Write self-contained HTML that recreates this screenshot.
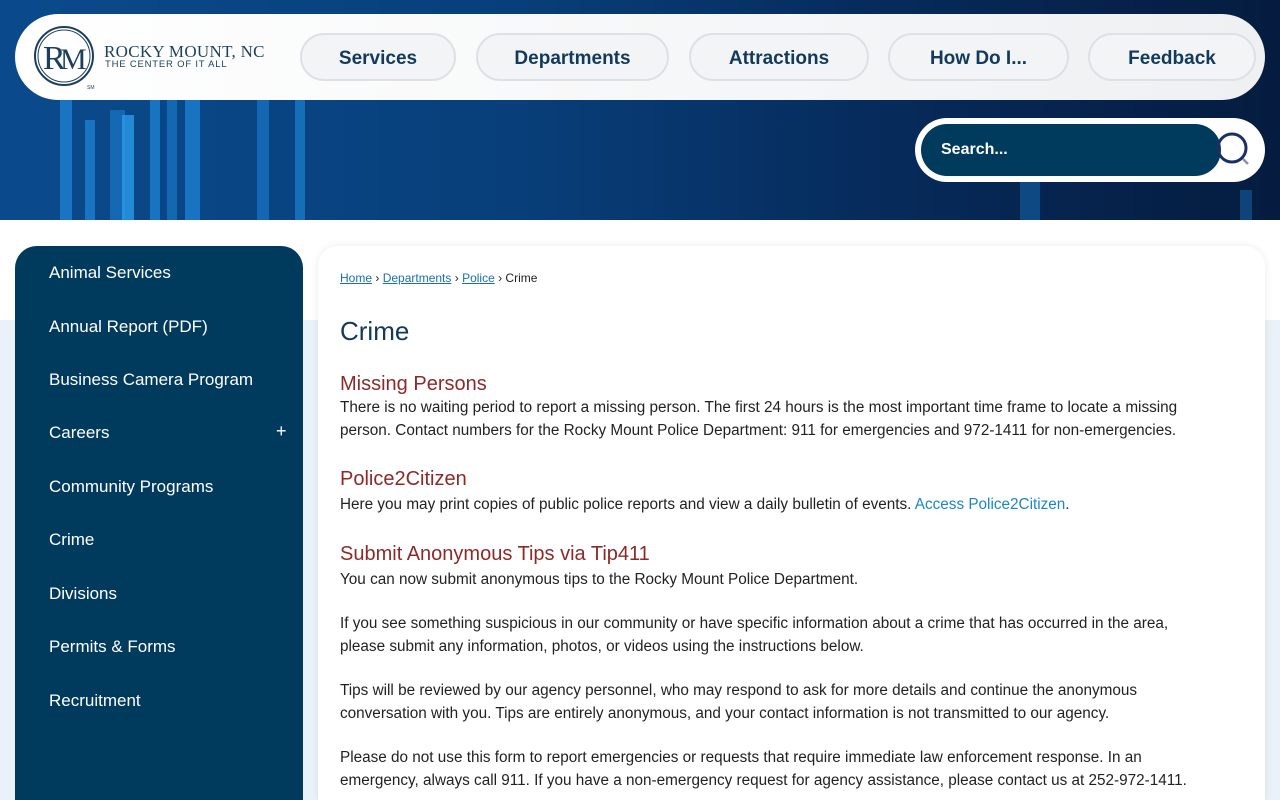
<!DOCTYPE html>
<html><head><meta charset="utf-8"><style>
*{box-sizing:border-box;margin:0;padding:0}
html,body{width:1280px;height:800px;overflow:hidden}
body{font-family:"Liberation Sans",sans-serif;background:#fff;position:relative}
.hdr{position:absolute;left:0;top:0;width:1280px;height:220px;background:linear-gradient(90deg,#0a4a8c 0%,#083f7a 40%,#062a5a 70%,#051c3f 100%);overflow:hidden}
.bar{position:absolute;bottom:0;background:#1d7fd0;opacity:.8}
.lb{position:absolute;left:0;top:320px;width:1280px;height:480px;background:#e9f1f9}
.pill{position:absolute;left:15px;top:14px;width:1250px;height:86px;border-radius:43px;background:linear-gradient(90deg,#fff,#eef0f2)}
.nav{position:absolute;top:33px;height:48px;border:2px solid #dde1e5;border-radius:24px;background:#f3f4f6;color:#123a5c;font-weight:bold;font-size:19px;display:flex;align-items:center;justify-content:center;padding-top:3px}
.search{position:absolute;left:915px;top:118px;width:350px;height:64px;border-radius:32px;background:#fff}
.sin{position:absolute;left:6px;top:6px;width:300px;height:52px;border-radius:26px;background:#003a5d;color:#fff;font-weight:bold;font-size:16px;padding:17px 0 0 20px}
.side{position:absolute;left:15px;top:246px;width:288px;height:554px;background:#003a5d;border-radius:22px 22px 0 0}
.side div{position:absolute;left:34px;color:#fff;font-size:17px}
.card{position:absolute;left:318px;top:246px;width:947px;height:554px;background:#fff;border-radius:20px 20px 0 0;box-shadow:0 0 8px rgba(0,0,0,.08);padding:25px 22px;color:#222;overflow:hidden}
.in{width:870px}
.bc{font-size:12px;color:#222}
.bc a{color:#1a6fb0;text-decoration:underline}
h1{font-weight:normal;font-size:26px;color:#12385a;margin:31px 0 26px}
h2{font-weight:normal;font-size:20px;color:#8c2a2a;margin:0 0 3px;padding-top:4px}
h1+h2{padding-top:0;margin-bottom:1px}
p{font-size:15.3px;line-height:22.5px;margin-bottom:22px}
.lk{color:#1c87c5}
</style></head><body>
<div class="hdr">
<div class="bar" style="left:60px;width:12px;height:120px"></div>
<div class="bar" style="left:85px;width:10px;height:100px"></div>
<div class="bar" style="left:110px;width:15px;height:110px;opacity:.6"></div>
<div class="bar" style="left:122px;width:12px;height:105px;background:#2a9be8"></div>
<div class="bar" style="left:150px;width:10px;height:120px"></div>
<div class="bar" style="left:167px;width:10px;height:120px;opacity:.6"></div>
<div class="bar" style="left:185px;width:15px;height:120px"></div>
<div class="bar" style="left:257px;width:12px;height:120px;opacity:.6"></div>
<div class="bar" style="left:295px;width:10px;height:120px;opacity:.7"></div>
<div class="bar" style="left:1020px;width:20px;height:50px;opacity:.4"></div>
<div class="bar" style="left:1240px;width:12px;height:30px;opacity:.4"></div>
</div>
<div class="lb"></div>
<div class="pill"></div>
<svg style="position:absolute;left:33px;top:25px" width="64" height="66" viewBox="0 0 64 66"><circle cx="31" cy="31" r="29" fill="none" stroke="#1d3f5c" stroke-width="2"/><circle cx="31" cy="31" r="26" fill="none" stroke="#1d3f5c" stroke-width="1"/><text x="10" y="44" font-family="Liberation Serif" font-size="34" fill="#1d3f5c">R</text><text x="27" y="44" font-family="Liberation Serif" font-size="30" fill="#1d3f5c">M</text><text x="54" y="64" font-size="5" fill="#1d3f5c">SM</text></svg>
<div style="position:absolute;left:104px;top:42px;font-family:'Liberation Serif',serif;color:#1d3f5c;font-size:17px;letter-spacing:.3px">ROCKY MOUNT, NC</div>
<div style="position:absolute;left:105px;top:59px;color:#1d3f5c;font-size:9.5px;letter-spacing:.8px">THE CENTER OF IT ALL</div>
<div class="nav" style="left:300px;width:156px">Services</div>
<div class="nav" style="left:476px;width:193px">Departments</div>
<div class="nav" style="left:689px;width:180px">Attractions</div>
<div class="nav" style="left:888px;width:181px">How Do I...</div>
<div class="nav" style="left:1088px;width:168px">Feedback</div>
<div class="search"><div class="sin">Search...</div>
<svg style="position:absolute;left:300px;top:14px" width="36" height="36" viewBox="0 0 36 36"><circle cx="17" cy="16" r="14" fill="none" stroke="#1c2e66" stroke-width="3"/><line x1="28" y1="27" x2="33" y2="32" stroke="#8a93a8" stroke-width="2.5"/></svg></div>
<div class="side">
<div style="top:17px">Animal Services</div>
<div style="top:71px">Annual Report (PDF)</div>
<div style="top:124px">Business Camera Program</div>
<div style="top:177px">Careers</div><div style="top:175px;left:261px;font-size:18px">+</div>
<div style="top:231px">Community Programs</div>
<div style="top:284px">Crime</div>
<div style="top:338px">Divisions</div>
<div style="top:391px">Permits &amp; Forms</div>
<div style="top:445px">Recruitment</div>
</div>
<div class="card"><div class="in">
<div class="bc"><a>Home</a> › <a>Departments</a> › <a>Police</a> › Crime</div>
<h1>Crime</h1>
<h2>Missing Persons</h2>
<p>There is no waiting period to report a missing person. The first 24 hours is the most important time frame to locate a missing person. Contact numbers for the Rocky Mount Police Department: 911 for emergencies and 972-1411 for non-emergencies.</p>
<h2>Police2Citizen</h2>
<p>Here you may print copies of public police reports and view a daily bulletin of events. <span class="lk">Access Police2Citizen</span>.</p>
<h2>Submit Anonymous Tips via Tip411</h2>
<p>You can now submit anonymous tips to the Rocky Mount Police Department.</p>
<p>If you see something suspicious in our community or have specific information about a crime that has occurred in the area, please submit any information, photos, or videos using the instructions below.</p>
<p>Tips will be reviewed by our agency personnel, who may respond to ask for more details and continue the anonymous conversation with you. Tips are entirely anonymous, and your contact information is not transmitted to our agency.</p>
<p>Please do not use this form to report emergencies or requests that require immediate law enforcement response. In an emergency, always call 911. If you have a non-emergency request for agency assistance, please contact us at 252-972-1411.</p>
</div></div>
</body></html>
